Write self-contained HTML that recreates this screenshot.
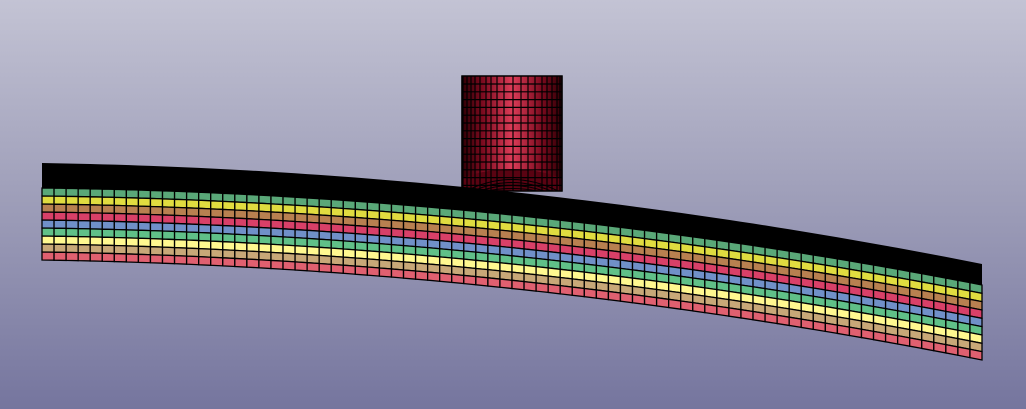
<!DOCTYPE html>
<html><head><meta charset="utf-8"><style>
html,body{margin:0;padding:0;width:1026px;height:409px;overflow:hidden}
body{background:linear-gradient(#c3c3d4,#9d9db8 50%,#75759e)}
svg{position:absolute;left:0;top:0}
</style></head><body>
<svg id="s" width="1026" height="409" viewBox="0 0 1026 409">
<defs>
<linearGradient id="cyl" x1="0" x2="1" y1="0" y2="0">
<stop offset="0" stop-color="#300006"/>
<stop offset="0.2" stop-color="#7a0a1e"/>
<stop offset="0.5" stop-color="#dc3c58"/>
<stop offset="0.8" stop-color="#7a0a1e"/>
<stop offset="1" stop-color="#300006"/>
</linearGradient>
</defs>
<g id="cylg"></g>
<g id="beam"></g>
</svg>
<script>
var NS="http://www.w3.org/2000/svg";
function el(p,t,a){var e=document.createElementNS(NS,t);for(var k in a)e.setAttribute(k,a[k]);p.appendChild(e);return e;}
var cg=document.getElementById('cylg');
el(cg,'rect',{x:462,y:76,width:100,height:115,fill:'url(#cyl)'});
el(cg,'path',{d:'M462 191 L462 178 Q512 160 562 178 L562 191 Z',fill:'#5a0312'});
var cols=[462,463,467,471,475,480,486,491,497,504,513,521,528,535,542,547,552,557,560,562];
cols.forEach(function(x){el(cg,'line',{x1:x,y1:76,x2:x,y2:191,stroke:'#000','stroke-width':1.2});});
for(var y=84;y<191;y+=7.8){el(cg,'line',{x1:462,y1:y,x2:562,y2:y,stroke:'#000','stroke-width':1.2});}
for(var r=0;r<4;r++){el(cg,'path',{d:'M'+(466+r*7)+' 191 Q512 '+(168+r*6)+' '+(558-r*7)+' 191',fill:'none',stroke:'#000','stroke-width':1});}
el(cg,'rect',{x:462,y:76,width:100,height:115,fill:'none',stroke:'#000','stroke-width':1.5});
var b=document.getElementById('beam');
var x0=42,x1=982,N=78;
var colors=['#5aa878','#e0dc40','#b88050','#d84068','#7090c8','#60c088','#fff890','#c8a878','#e06070'];
function topY(t){return 163+15*t+86*t*t;}
function blackH(t){return 25-4*t;}
function layH(t){return 8+0.33*t;}
el(b,'path',{d:(function(){var d='';for(var i=0;i<=N;i++){var t=i/N,x=x0+(x1-x0)*t;d+=(i?'L':'M')+x+' '+topY(t);}for(var i=N;i>=0;i--){var t=i/N,x=x0+(x1-x0)*t;d+='L'+x+' '+(topY(t)+blackH(t)+1);}return d+'Z';})(),fill:'#000'});
for(var i=0;i<N;i++){
 var ta=i/N,tb=(i+1)/N,xa=x0+(x1-x0)*ta,xb=x0+(x1-x0)*tb;
 var ya=topY(ta)+blackH(ta),yb=topY(tb)+blackH(tb);
 for(var l=0;l<9;l++){
  var ha=layH(ta),hb=layH(tb);
  el(b,'polygon',{points:xa+','+(ya+l*ha)+' '+xb+','+(yb+l*hb)+' '+xb+','+(yb+(l+1)*hb)+' '+xa+','+(ya+(l+1)*ha),fill:colors[l],stroke:'#000','stroke-width':1.3});
 }
}
</script>
</body></html>
